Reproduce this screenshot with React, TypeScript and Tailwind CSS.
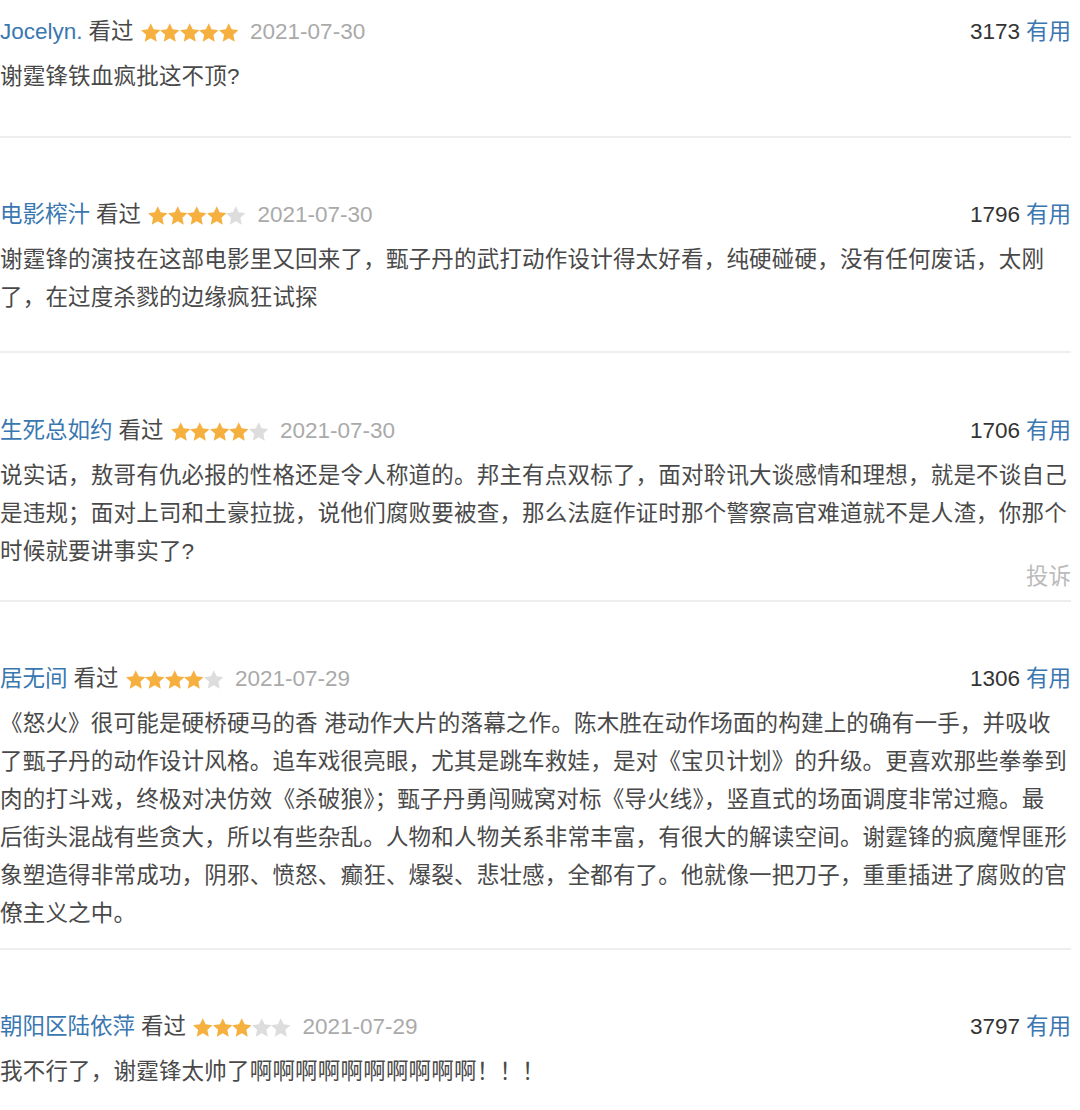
import React from 'react';

type Comment = {
  user: string;
  rating: number;
  date: string;
  votes: number;
  lines: string[];
  pt: string;
  pb: string;
  report?: boolean;
};

const comments: Comment[] = [
  {
    user: 'Jocelyn.',
    rating: 5,
    date: '2021-07-30',
    votes: 3173,
    lines: ['谢霆锋铁血疯批这不顶?'],
    pt: 'pt-[13px]',
    pb: 'pb-[40px]',
  },
  {
    user: '电影榨汁',
    rating: 4,
    date: '2021-07-30',
    votes: 1796,
    lines: [
      '谢霆锋的演技在这部电影里又回来了，甄子丹的武打动作设计得太好看，纯硬碰硬，没有任何废话，太刚',
      '了，在过度杀戮的边缘疯狂试探',
    ],
    pt: 'pt-[58px]',
    pb: 'pb-[34px]',
  },
  {
    user: '生死总如约',
    rating: 4,
    date: '2021-07-30',
    votes: 1706,
    lines: [
      '说实话，敖哥有仇必报的性格还是令人称道的。邦主有点双标了，面对聆讯大谈感情和理想，就是不谈自己',
      '是违规；面对上司和土豪拉拢，说他们腐败要被查，那么法庭作证时那个警察高官难道就不是人渣，你那个',
      '时候就要讲事实了?',
    ],
    pt: 'pt-[59px]',
    pb: 'pb-[11px]',
    report: true,
  },
  {
    user: '居无间',
    rating: 4,
    date: '2021-07-29',
    votes: 1306,
    lines: [
      '《怒火》很可能是硬桥硬马的香 港动作大片的落幕之作。陈木胜在动作场面的构建上的确有一手，并吸收',
      '了甄子丹的动作设计风格。追车戏很亮眼，尤其是跳车救娃，是对《宝贝计划》的升级。更喜欢那些拳拳到',
      '肉的打斗戏，终极对决仿效《杀破狼》；甄子丹勇闯贼窝对标《导火线》，竖直式的场面调度非常过瘾。最',
      '后街头混战有些贪大，所以有些杂乱。人物和人物关系非常丰富，有很大的解读空间。谢霆锋的疯魔悍匪形',
      '象塑造得非常成功，阴邪、愤怒、癫狂、爆裂、悲壮感，全都有了。他就像一把刀子，重重插进了腐败的官',
      '僚主义之中。',
    ],
    pt: 'pt-[58px]',
    pb: 'pb-[15px]',
  },
  {
    user: '朝阳区陆依萍',
    rating: 3,
    date: '2021-07-29',
    votes: 3797,
    lines: ['我不行了，谢霆锋太帅了啊啊啊啊啊啊啊啊啊啊！！！'],
    pt: 'pt-[58px]',
    pb: 'pb-[16px]',
  },
];

const Star = ({ on }: { on: boolean }) => (
  <svg viewBox="0 0 24 23" className="w-[19.5px] h-[19px]" aria-hidden="true">
    <polygon
      points="12,0 15.5,7.6 24,8.6 17.7,14.3 19.4,22.8 12,18.5 4.6,22.8 6.3,14.3 0,8.6 8.5,7.6"
      fill={on ? '#f5b040' : '#dddddd'}
    />
  </svg>
);

const Stars = ({ rating }: { rating: number }) => (
  <span className="flex items-center">
    {[1, 2, 3, 4, 5].map((i) => (
      <Star key={i} on={i <= rating} />
    ))}
  </span>
);

const CommentItem = ({ c }: { c: Comment }) => (
  <div className={`${c.pt} ${c.pb}`}>
    <div className="flex items-center justify-between h-[38px] leading-[38px]">
      <div className="flex items-center whitespace-nowrap">
        <span className="text-[#3a77b1]">{c.user}</span>
        <span className="ml-[6px] text-[#494949]">看过</span>
        <span className="ml-[7px]">
          <Stars rating={c.rating} />
        </span>
        <span className="ml-[12px] text-[#aaaaaa]">{c.date}</span>
      </div>
      <div className="whitespace-nowrap">
        <span className="text-[#333333]">{c.votes}</span>
        <span className="ml-[6px] text-[#3a77b1]">有用</span>
      </div>
    </div>
    <div className="mt-[7px] text-[#494949] tracking-[0.2px]">
      {c.lines.map((l, i) => (
        <div key={i} className="h-[38px] leading-[38px] whitespace-nowrap">
          {l}
        </div>
      ))}
    </div>
    {c.report && (
      <div className="-mt-[6px] h-[24px] leading-[24px] text-right text-[#bbbbbb]">投诉</div>
    )}
  </div>
);

export default function App() {
  return (
    <div
      className="bg-white w-[1080px] min-h-[1110px] text-[22.5px]"
      style={{ fontFamily: '"Liberation Sans", "Noto Sans CJK SC", sans-serif' }}
    >
      <div className="w-[1071px]">
        {comments.map((c, i) => (
          <div key={i}>
            <CommentItem c={c} />
            {i < comments.length - 1 && <div className="h-[2px] bg-[#eeeeee]" />}
          </div>
        ))}
      </div>
    </div>
  );
}
